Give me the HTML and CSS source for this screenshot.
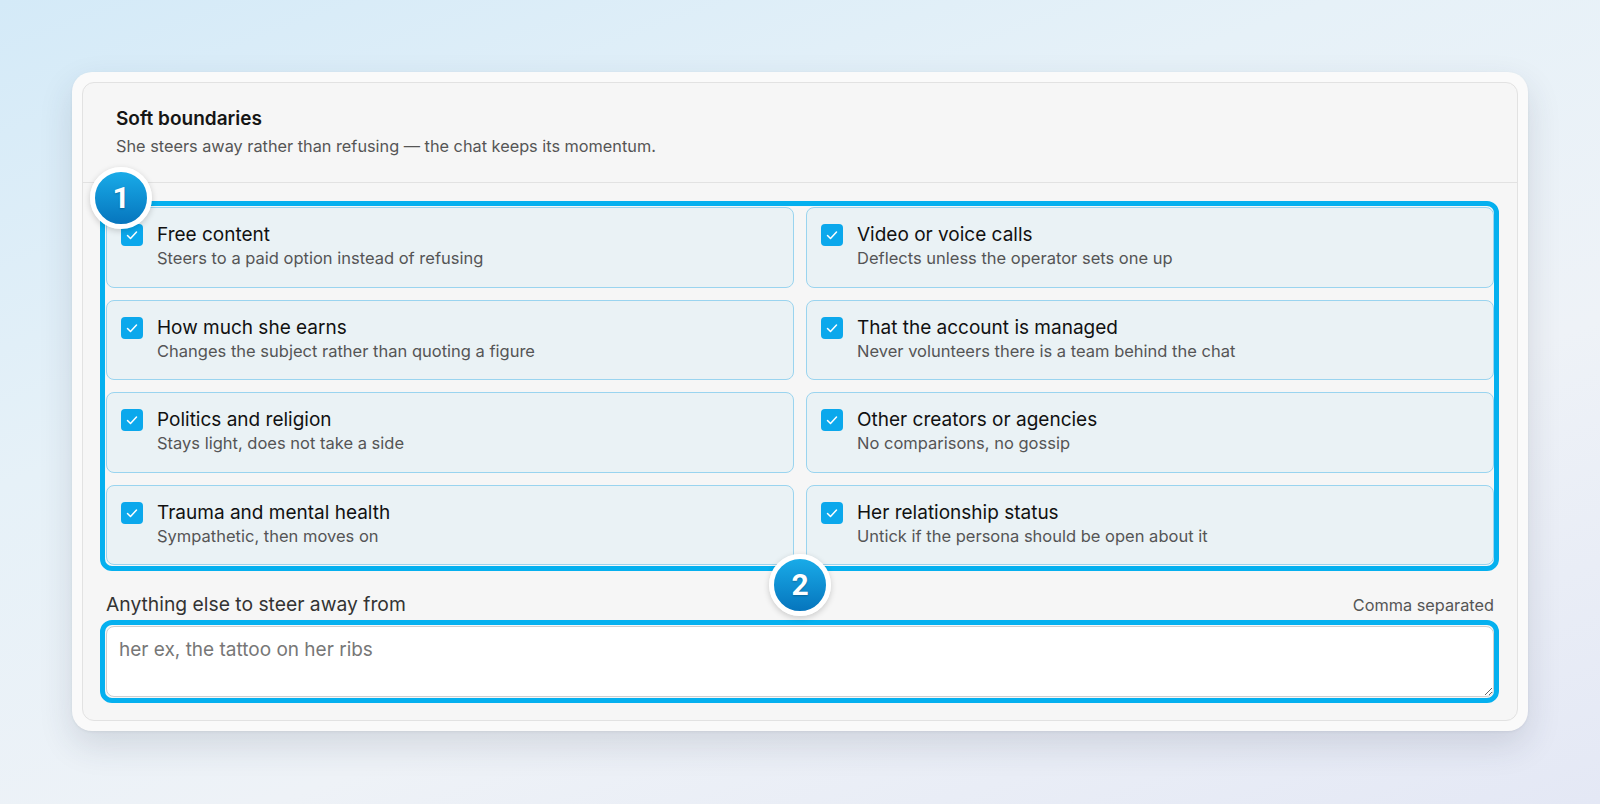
FILE: index.html
```html
<!DOCTYPE html>
<html lang="en">
<head>
    <meta charset="UTF-8">
    <meta name="viewport" content="width=device-width, initial-scale=1.0">
    <title>Soft boundaries</title>
    <link rel="stylesheet" href="styles.css">
</head>
<body>
    <div class="frame">
        <section class="panel">
            <header class="panel-head">
                <h2>Soft boundaries</h2>
                <p>She steers away rather than refusing — the chat keeps its momentum.</p>
            </header>

            <div class="panel-body">
                <div class="topics">
                    <span class="step step-one">1</span>

                    <label class="topic">
                        <input type="checkbox" checked>
                        <span class="box"><svg viewBox="0 0 22 22"><polyline points="6.5,11.5 9.5,14.5 15.5,8"/></svg></span>
                        <span class="topic-text">
                            <span class="topic-title">Free content</span>
                            <span class="topic-desc">Steers to a paid option instead of refusing</span>
                        </span>
                    </label>
                    <label class="topic">
                        <input type="checkbox" checked>
                        <span class="box"><svg viewBox="0 0 22 22"><polyline points="6.5,11.5 9.5,14.5 15.5,8"/></svg></span>
                        <span class="topic-text">
                            <span class="topic-title">Video or voice calls</span>
                            <span class="topic-desc">Deflects unless the operator sets one up</span>
                        </span>
                    </label>
                    <label class="topic">
                        <input type="checkbox" checked>
                        <span class="box"><svg viewBox="0 0 22 22"><polyline points="6.5,11.5 9.5,14.5 15.5,8"/></svg></span>
                        <span class="topic-text">
                            <span class="topic-title">How much she earns</span>
                            <span class="topic-desc">Changes the subject rather than quoting a figure</span>
                        </span>
                    </label>
                    <label class="topic">
                        <input type="checkbox" checked>
                        <span class="box"><svg viewBox="0 0 22 22"><polyline points="6.5,11.5 9.5,14.5 15.5,8"/></svg></span>
                        <span class="topic-text">
                            <span class="topic-title">That the account is managed</span>
                            <span class="topic-desc">Never volunteers there is a team behind the chat</span>
                        </span>
                    </label>
                    <label class="topic">
                        <input type="checkbox" checked>
                        <span class="box"><svg viewBox="0 0 22 22"><polyline points="6.5,11.5 9.5,14.5 15.5,8"/></svg></span>
                        <span class="topic-text">
                            <span class="topic-title">Politics and religion</span>
                            <span class="topic-desc">Stays light, does not take a side</span>
                        </span>
                    </label>
                    <label class="topic">
                        <input type="checkbox" checked>
                        <span class="box"><svg viewBox="0 0 22 22"><polyline points="6.5,11.5 9.5,14.5 15.5,8"/></svg></span>
                        <span class="topic-text">
                            <span class="topic-title">Other creators or agencies</span>
                            <span class="topic-desc">No comparisons, no gossip</span>
                        </span>
                    </label>
                    <label class="topic">
                        <input type="checkbox" checked>
                        <span class="box"><svg viewBox="0 0 22 22"><polyline points="6.5,11.5 9.5,14.5 15.5,8"/></svg></span>
                        <span class="topic-text">
                            <span class="topic-title">Trauma and mental health</span>
                            <span class="topic-desc">Sympathetic, then moves on</span>
                        </span>
                    </label>
                    <label class="topic">
                        <input type="checkbox" checked>
                        <span class="box"><svg viewBox="0 0 22 22"><polyline points="6.5,11.5 9.5,14.5 15.5,8"/></svg></span>
                        <span class="topic-text">
                            <span class="topic-title">Her relationship status</span>
                            <span class="topic-desc">Untick if the persona should be open about it</span>
                        </span>
                    </label>

                    <span class="step step-two">2</span>
                </div>

                <div class="extra">
                    <div class="extra-head">
                        <label for="extra-topics">Anything else to steer away from</label>
                        <span class="hint">Comma separated</span>
                    </div>
                    <div class="field">
                        <textarea id="extra-topics" rows="2" placeholder="her ex, the tattoo on her ribs"></textarea>
                    </div>
                </div>
            </div>
        </section>
    </div>
</body>
</html>
```

FILE: styles.css
```css
* {
    box-sizing: border-box;
}
body {
    margin: 0;
    height: 804px;
    overflow: hidden;
    font-family: Inter, "Noto Sans", sans-serif;
    background: linear-gradient(160deg, #d4eaf8 0%, #e6f1f8 35%, #eef2f7 65%, #e4e8f5 100%);
    padding-top: 72px;
}
.frame {
    width: 1456px;
    margin: 0 auto;
    padding: 10px;
    background: #fafafa;
    border-radius: 20px;
    box-shadow: 0 14px 34px rgba(40, 50, 80, 0.14), 0 1px 3px rgba(0, 0, 0, 0.06);
}
.panel {
    background: #f6f6f6;
    border: 1px solid #e2e2e2;
    border-radius: 12px;
}
.panel-head {
    padding: 24px 33px 24px;
    border-bottom: 1px solid #e2e2e2;
}
.panel-head h2 {
    margin: 0 0 4px;
    font-size: 19px;
    line-height: 24px;
    font-weight: 600;
    color: #151515;
}
.panel-head p {
    margin: 0;
    font-size: 16.3px;
    line-height: 23px;
    color: #555;
}
.panel-body {
    padding: 24px 23px 23px;
}

/* checkbox grid */
.topics {
    position: relative;
    display: grid;
    grid-template-columns: 1fr 1fr;
    gap: 12px;
}
.topics::after,
.field::after {
    content: "";
    position: absolute;
    top: -6px;
    left: -6px;
    right: -5px;
    bottom: -6px;
    border: 5px solid #05b0ef;
    border-radius: 12px;
    pointer-events: none;
}
.topic {
    display: flex;
    align-items: flex-start;
    gap: 14px;
    padding: 14px 14px 17.5px;
    background: #eaf2f5;
    border: 1px solid #9ad4ef;
    border-radius: 8px;
    cursor: pointer;
}
.topic input {
    display: none;
}
.box {
    flex: none;
    width: 22px;
    height: 22px;
    margin-top: 2px;
    border-radius: 4px;
    background: #0ba8ec;
}
.box svg {
    display: block;
    width: 22px;
    height: 22px;
    fill: none;
    stroke: #fff;
    stroke-width: 1.5;
    stroke-linecap: round;
    stroke-linejoin: round;
}
.topic-text {
    display: flex;
    flex-direction: column;
}
.topic-title {
    font-size: 19px;
    line-height: 25px;
    color: #111;
}
.topic-desc {
    font-size: 16.5px;
    line-height: 22px;
    color: #555;
}

/* numbered markers */
.step {
    position: absolute;
    z-index: 2;
    width: 62px;
    height: 62px;
    border-radius: 50%;
    border: 5px solid #fff;
    background: linear-gradient(180deg, #19abe8 0%, #0675bd 100%);
    box-shadow: 0 2px 6px rgba(0, 0, 0, 0.18);
    color: #fff;
    font-family: Roboto, sans-serif;
    font-weight: 700;
    font-size: 30px;
    line-height: 52px;
    text-align: center;
    text-shadow: 0 1px 2px rgba(0, 0, 0, 0.25);
}
.step-one {
    left: -16px;
    top: -40px;
}
.step-two {
    left: 663px;
    bottom: -51px;
}

/* free text field */
.extra {
    margin-top: 27px;
}
.extra-head {
    display: flex;
    justify-content: space-between;
    align-items: baseline;
    margin-bottom: 9px;
}
.extra-head label {
    font-size: 19.3px;
    line-height: 25px;
    color: #333;
}
.hint {
    font-size: 16.3px;
    color: #555;
}
.field {
    position: relative;
}
.field textarea {
    display: block;
    width: 100%;
    height: 71px;
    padding: 10px 12px;
    font-family: inherit;
    font-size: 19px;
    line-height: 25px;
    color: #222;
    background: #fff;
    border: 1px solid #cfcfcf;
    border-radius: 8px;
    outline: none;
}
.field textarea::placeholder {
    color: #777;
}
```
